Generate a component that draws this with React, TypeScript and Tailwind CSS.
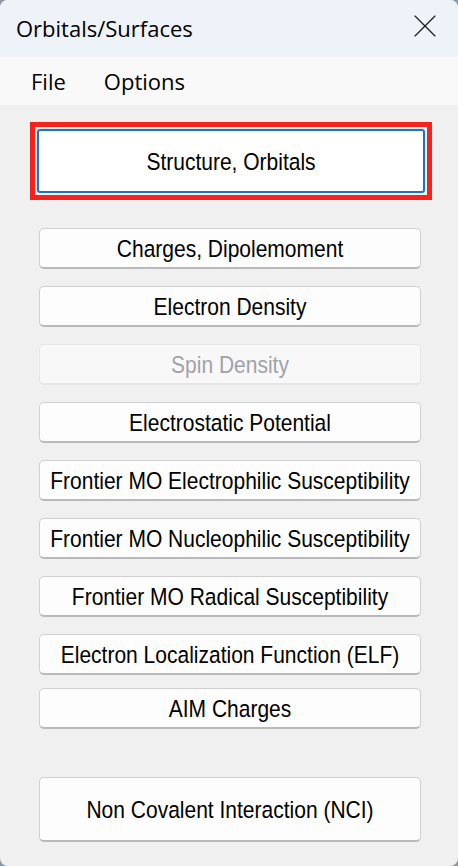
import { X } from 'lucide-react';

// one dialog button, classic winforms look
type BtnProps = {
  label: string;
  disabled?: boolean;
  tall?: boolean;
  className?: string;
};

const btnFont = { fontFamily: '"Liberation Sans", Arial, sans-serif' };

const DialogButton: React.FC<BtnProps> = ({ label, disabled, tall, className = '' }) => (
  <button
    type="button"
    disabled={disabled}
    className={`flex w-[382px] items-center justify-center whitespace-nowrap rounded-[5px] border border-b-2 ${
      tall ? 'h-[65px]' : 'h-[41px]'
    } ${
      disabled
        ? 'border-[#e6e6e6] border-b-[#e6e6e6] bg-[#f8f8f8] text-[#a2a2aa]'
        : 'border-[#d0d0d0] border-b-[#b9b9b9] bg-[#fdfdfd] text-black'
    } text-[21px] leading-none ${className}`}
    style={btnFont}
  >
    <span className="scale-y-[1.12]">{label}</span>
  </button>
);

const App: React.FC = () => {
  const buttons = [
    'Charges, Dipolemoment',
    'Electron Density',
    'Spin Density',
    'Electrostatic Potential',
    'Frontier MO Electrophilic Susceptibility',
    'Frontier MO Nucleophilic Susceptibility',
    'Frontier MO Radical Susceptibility',
    'Electron Localization Function (ELF)',
  ];

  return (
    <div className="h-[866px] w-[458px] bg-[#8d99a6]">
      <div
        className="flex h-full w-full flex-col overflow-hidden rounded-[8px] bg-[#f0f0f0]"
        style={{ fontFamily: '"Open Sans", "Noto Sans", sans-serif' }}
      >
        {/* TITLE BAR */}
        <div className="flex h-[57px] shrink-0 items-center justify-between bg-[#eef2f9] pl-[16px] pr-[13px]">
          <span className="text-[22px] text-black">Orbitals/Surfaces</span>
          <X className="mb-[5px] h-[40px] w-[40px] text-[#1a1a1a]" strokeWidth={0.7} />
        </div>

        {/* MENU BAR */}
        <div className="flex h-[48px] shrink-0 items-center gap-[38px] bg-[#f9f9f9] pl-[31px] text-[22px] text-black">
          <span>File</span>
          <span>Options</span>
        </div>

        {/* BUTTONS */}
        <div className="flex flex-col pl-[39px]">
          <div className="-ml-[9px] mt-[17px] w-[402px] border-[5px] border-[#f5231b] p-[2px]">
            <button
              type="button"
              className="flex h-[64px] w-full items-center justify-center whitespace-nowrap rounded-[3px] border-2 border-[#1e73c8] bg-white text-[21px] leading-none text-black"
              style={btnFont}
            >
              <span className="scale-y-[1.12]">Structure, Orbitals</span>
            </button>
          </div>

          <div className="mt-[28px] flex flex-col gap-[17px]">
            {buttons.map((b) => (
              <DialogButton key={b} label={b} disabled={b === 'Spin Density'} />
            ))}
          </div>

          <DialogButton label="AIM Charges" className="mt-[13px]" />
          <DialogButton label="Non Covalent Interaction (NCI)" tall className="mt-[48px]" />
        </div>
      </div>
    </div>
  );
};

export default App;
